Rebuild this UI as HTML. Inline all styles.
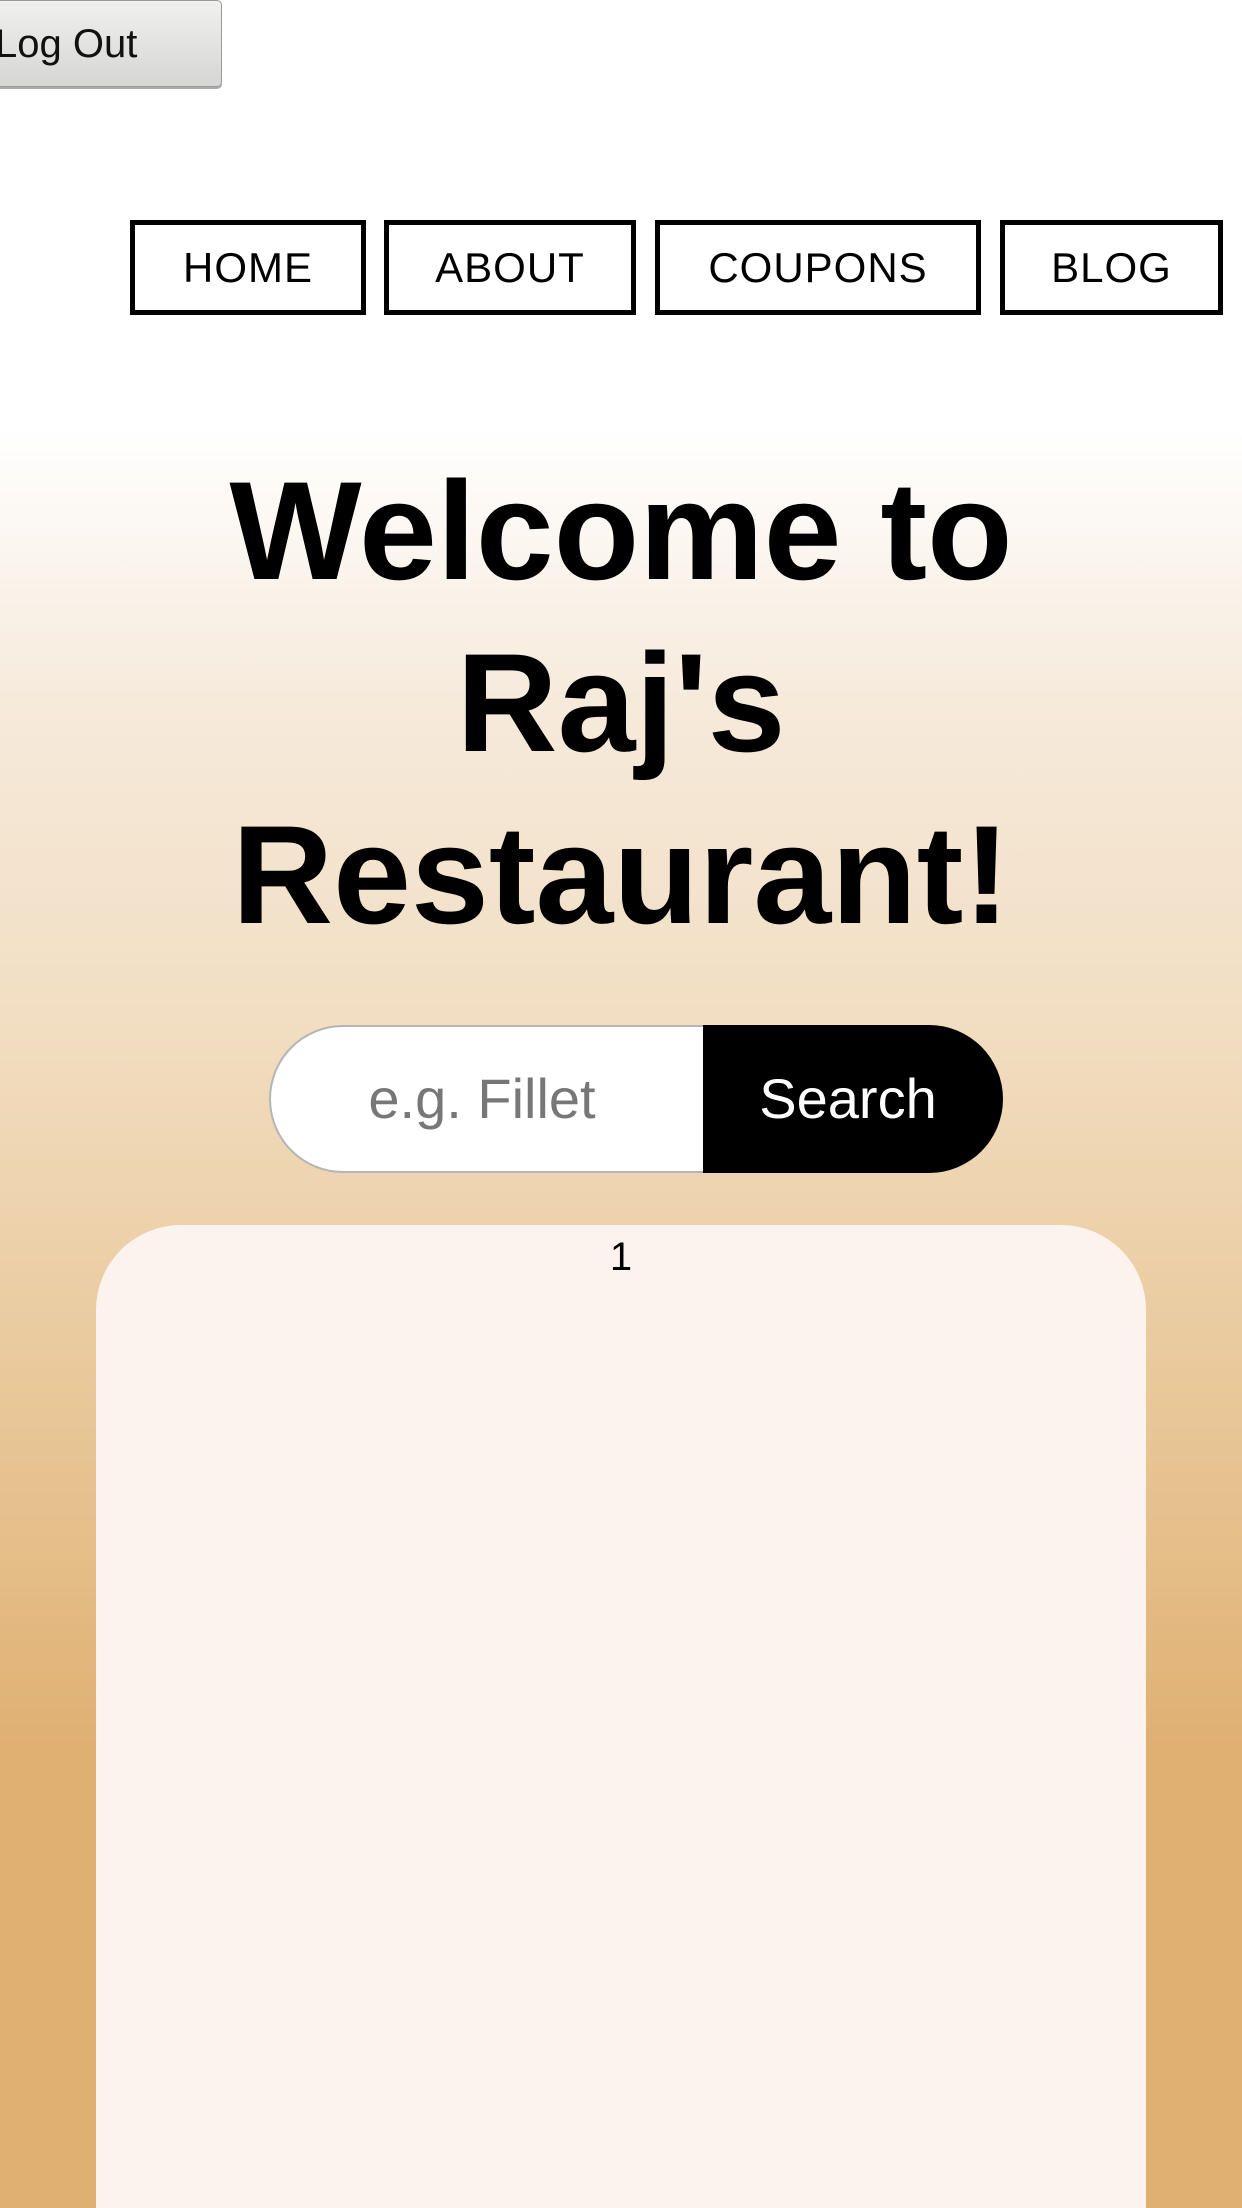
<!DOCTYPE html>
<html><head><meta charset="utf-8"><style>
html,body{margin:0;padding:0;overflow:hidden;}
body{width:1242px;height:2208px;overflow:hidden;position:relative;
background:linear-gradient(to bottom,#fff 0px,#fff 430px,#f6eadb 700px,#f2dfc4 1000px,#ecd0a9 1250px,#e5be89 1550px,#e0b073 1745px,#e0b073 2208px);
font-family:"Liberation Sans",sans-serif;}
.logout{position:absolute;left:-14px;top:0;width:236px;height:87px;border:1px solid #999;border-radius:5px;
background:linear-gradient(#f0f0ef,#d6d6d4);box-shadow:0 2px 0 #aaa;font-size:40px;line-height:87px;color:#111;box-sizing:border-box;}
.logout span{position:absolute;left:8px;top:0;}
.nav a{position:absolute;top:220px;height:95px;border:5px solid #000;box-sizing:border-box;display:flex;align-items:center;justify-content:center;
font-size:42px;letter-spacing:1px;color:#000;text-decoration:none;background:#fff;}
h1{position:absolute;left:0;top:445px;width:1242px;margin:0;text-align:center;font-size:140px;line-height:172px;font-weight:bold;letter-spacing:0;color:#000;}
.search{position:absolute;left:269px;top:1025px;width:734px;height:148px;}
.inp{position:absolute;left:0;top:0;width:434px;height:148px;box-sizing:border-box;border:2px solid #b5b5b5;border-right:none;border-radius:74px 0 0 74px;background:#fff;
color:#777;font-size:56px;line-height:144px;text-align:center;padding-right:10px;}
.btn{position:absolute;left:434px;top:0;width:300px;height:148px;background:#000;border-radius:0 74px 74px 0;color:#fff;font-size:56px;line-height:148px;text-align:center;padding-right:10px;box-sizing:border-box;}
.card{position:absolute;left:96px;top:1225px;width:1050px;height:983px;background:#fdf3ee;border-radius:85px 85px 0 0;}
.card span{position:absolute;left:0;width:1050px;top:10px;text-align:center;font-size:40px;}
</style></head><body>
<div class="logout"><span>Log Out</span></div>
<div class="nav">
<a style="left:130px;width:236px">HOME</a>
<a style="left:384px;width:252px">ABOUT</a>
<a style="left:655px;width:326px">COUPONS</a>
<a style="left:1000px;width:223px">BLOG</a>
</div>
<h1>Welcome to<br>Raj's<br>Restaurant!</h1>
<div class="search"><div class="inp">e.g. Fillet</div><div class="btn">Search</div></div>
<div class="card"><span>1</span></div>
</body></html>
